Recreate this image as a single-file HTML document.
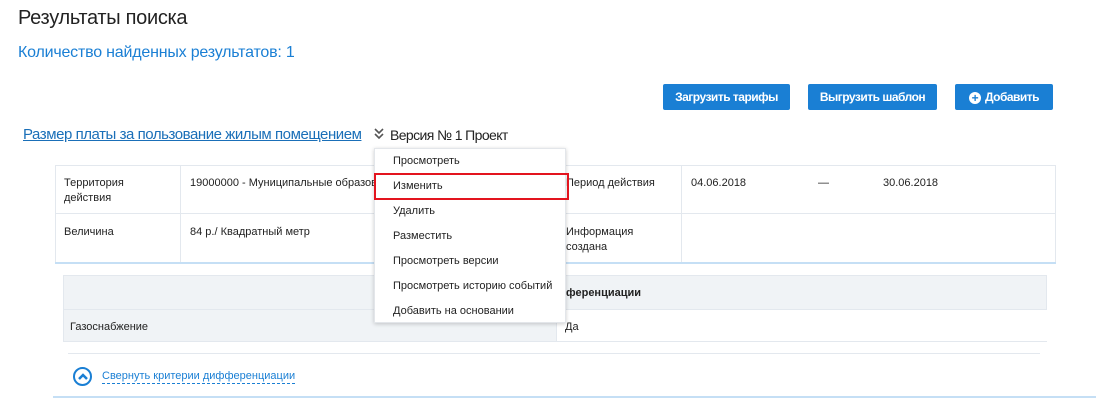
<!DOCTYPE html>
<html><head><meta charset="utf-8"><style>
body{margin:0;width:1096px;height:420px;background:#fff;font-family:"Liberation Sans",sans-serif;position:relative;overflow:hidden;color:#222}
.a{position:absolute;white-space:nowrap}
.btn{position:absolute;top:84px;height:26px;background:#1a7fd4;color:#fff;border-radius:2px;font-size:12px;font-weight:bold;text-align:center;line-height:26px;letter-spacing:-0.5px}
.c{position:absolute;font-size:11px;color:#222;line-height:15px}
.menu{position:absolute;left:374px;top:148px;width:192px;height:175px;background:#fff;box-shadow:0 1px 4px rgba(0,0,0,.2);border:1px solid #e3e6ea;box-sizing:border-box}
.mi{position:absolute;left:18px;font-size:11px;color:#222}
</style></head><body>
<div class="a" style="left:18px;top:7px;font-size:20px;color:#222;letter-spacing:-0.3px">Результаты поиска</div>
<div class="a" style="left:18px;top:44px;font-size:16px;color:#1a7fd4;letter-spacing:-0.2px">Количество найденных результатов: 1</div>
<div class="btn" style="left:663px;width:127px">Загрузить тарифы</div>
<div class="btn" style="left:808px;width:129px">Выгрузить шаблон</div>
<div class="btn" style="left:955px;width:98px"><span style="display:inline-block;width:12px;height:12px;border-radius:50%;background:#fff;color:#1a7fd4;line-height:12px;font-size:12px;vertical-align:-1px;margin-right:4px">+</span>Добавить</div>
<div class="a" style="left:23px;top:126px;font-size:15px;color:#1a6fb8;text-decoration:underline;letter-spacing:-0.45px">Размер платы за пользование жилым помещением</div>
<svg style="position:absolute;left:373px;top:127px" width="12" height="14"><path d="M2 2 L6 6 L10 2 M2 7 L6 11 L10 7" stroke="#555" stroke-width="1.6" fill="none"/></svg>
<div class="a" style="left:390px;top:127px;font-size:14px;color:#222;letter-spacing:-0.6px">Версия № 1 Проект</div>
<!-- table -->
<div style="position:absolute;left:55px;top:165px;width:1001px;height:97px;border:1px solid #e3e8ee;border-bottom:none;box-sizing:border-box"></div>
<div style="position:absolute;left:55px;top:213px;width:1001px;height:1px;background:#e3e8ee"></div>
<div style="position:absolute;left:180px;top:165px;width:1px;height:97px;background:#e3e8ee"></div>
<div style="position:absolute;left:555px;top:165px;width:1px;height:97px;background:#e3e8ee"></div>
<div style="position:absolute;left:681px;top:165px;width:1px;height:97px;background:#e3e8ee"></div>
<div style="position:absolute;left:55px;top:262px;width:1001px;height:2px;background:#c5dff5"></div>
<div class="c" style="left:64px;top:176px">Территория<br>действия</div>
<div class="c" style="left:190px;top:176px">19000000 - Муниципальные образов</div>
<div class="c" style="left:566px;top:176px">Период действия</div>
<div class="c" style="left:691px;top:176px">04.06.2018</div>
<div class="c" style="left:818px;top:176px">—</div>
<div class="c" style="left:883px;top:176px">30.06.2018</div>
<div class="c" style="left:64px;top:225px">Величина</div>
<div class="c" style="left:190px;top:225px">84 р./ Квадратный метр</div>
<div class="c" style="left:566px;top:225px">Информация<br>создана</div>
<!-- inner -->
<div style="position:absolute;left:63px;top:275px;width:984px;height:67px;border:1px solid #e3e8ee;box-sizing:border-box;background:#f0f3f6"></div>
<div style="position:absolute;left:64px;top:309px;width:982px;height:1px;background:#e3e8ee"></div>
<div style="position:absolute;left:556px;top:310px;width:490px;height:31px;background:#fff;border-left:1px solid #e3e8ee"></div>
<div class="c" style="left:566px;top:286px;font-weight:bold">ференциации</div>
<div class="c" style="left:70px;top:320px">Газоснабжение</div>
<div class="c" style="left:565px;top:320px">Да</div>
<div style="position:absolute;left:68px;top:353px;width:972px;height:1px;background:#e3e8ee"></div>
<div style="position:absolute;left:73px;top:367px;width:15px;height:15px;border:2.5px solid #1a7fd4;border-radius:50%"></div>
<svg style="position:absolute;left:73px;top:367px" width="20" height="20"><path d="M6 12 L10 8 L14 12" stroke="#1a7fd4" stroke-width="2.5" fill="none"/></svg>
<div class="a" style="left:102px;top:369px;font-size:11px;color:#1a7fd4;border-bottom:1px dashed #1a7fd4;line-height:14px">Свернуть критерии дифференциации</div>
<div style="position:absolute;left:53px;top:396px;width:1043px;height:2px;background:#c5dff5"></div>
<!-- menu -->
<div class="menu">
<div class="mi" style="top:6px">Просмотреть</div>
<div class="mi" style="top:31px">Изменить</div>
<div class="mi" style="top:56px">Удалить</div>
<div class="mi" style="top:81px">Разместить</div>
<div class="mi" style="top:106px">Просмотреть версии</div>
<div class="mi" style="top:131px">Просмотреть историю событий</div>
<div class="mi" style="top:156px">Добавить на основании</div>
</div>
<div style="position:absolute;left:374px;top:173px;width:195px;height:27px;border:2px solid #e3141e;box-sizing:border-box"></div>
</body></html>
